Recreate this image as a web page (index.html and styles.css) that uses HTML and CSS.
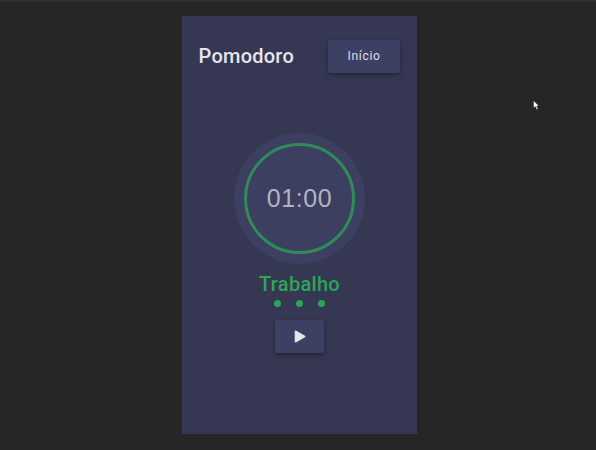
FILE: index.html
```html
<!DOCTYPE html>
<html lang="pt-BR">
<head>
<meta charset="utf-8">
<title>Pomodoro</title>
<link rel="stylesheet" href="styles.css">
</head>
<body>
<main class="app">
  <header class="header">
    <h1 class="title">Pomodoro</h1>
    <button class="button home">Início</button>
  </header>
  <section class="timer">
    <div class="dial"><div class="ring"><span class="time">01:00</span></div></div>
    <h2 class="phase">Trabalho</h2>
    <div class="dots"><i></i><i></i><i></i></div>
    <button class="button play" aria-label="Iniciar">
      <svg width="12" height="13" viewBox="0 0 12 13"><path d="M1.5 1.3 10.6 6.5 1.5 11.7Z" fill="#e6e5ea" stroke="#e6e5ea" stroke-width="1.6" stroke-linejoin="round"/></svg>
    </button>
  </section>
</main>
<svg class="cursor" width="8" height="12" viewBox="0 0 8 12"><path d="M.5.5V8L2.3 6.6 3.8 9.7 5 9.1 3.7 6.1H6Z" fill="#fff" stroke="#111" stroke-width=".4"/></svg>
</body>
</html>
```
FILE: styles.css
```css
* { box-sizing: border-box; }

body {
  margin: 0;
  height: 450px;
  padding-top: 14px;
  border-top: 2px solid #303030;
  background: #262626;
  font-family: Roboto, sans-serif;
  overflow: hidden;
}

.app {
  width: 235px;
  height: 417.5px;
  margin-left: 182px;
  background: #363752;
}

.header {
  display: flex;
  justify-content: space-between;
  align-items: center;
  padding: 23px 17px 0 16.5px;
}

.title {
  margin: 0;
  font-size: 20px;
  line-height: 34px;
  font-weight: 500;
  letter-spacing: 0.25px;
  color: #e6e5ef;
}

.button {
  display: flex;
  justify-content: center;
  align-items: center;
  height: 33px;
  padding: 0;
  border: 0;
  border-radius: 3px;
  background: #3c4062;
  color: #e0dfe9;
  font: 400 12px Roboto, sans-serif;
  letter-spacing: 0.7px;
  box-shadow: 0 2px 4px rgba(20, 20, 38, 0.6);
}

.home { width: 72px; }
.play { width: 49px; margin-top: 13.5px; }

.timer {
  display: flex;
  flex-direction: column;
  align-items: center;
  padding-top: 60px;
}

.dial,
.ring {
  display: flex;
  justify-content: center;
  align-items: center;
  border-radius: 50%;
}

.dial {
  width: 131px;
  height: 131px;
  background: #3c3f60;
}

.ring {
  width: 111px;
  height: 111px;
  border: 3px solid #2f8c59;
}

.time {
  font: 25px "Liberation Sans", sans-serif;
  letter-spacing: 0.6px;
  color: #b2b2c3;
}

.phase {
  margin: 8px 0 0;
  font-size: 20px;
  line-height: 24px;
  font-weight: 500;
  letter-spacing: 0.3px;
  color: #2ba658;
}

.dots {
  display: flex;
  gap: 15px;
  margin-top: 3.5px;
}

.dots i {
  width: 7px;
  height: 7px;
  border-radius: 50%;
  background: #2ba658;
}

.cursor {
  position: absolute;
  left: 533px;
  top: 100px;
}
```
